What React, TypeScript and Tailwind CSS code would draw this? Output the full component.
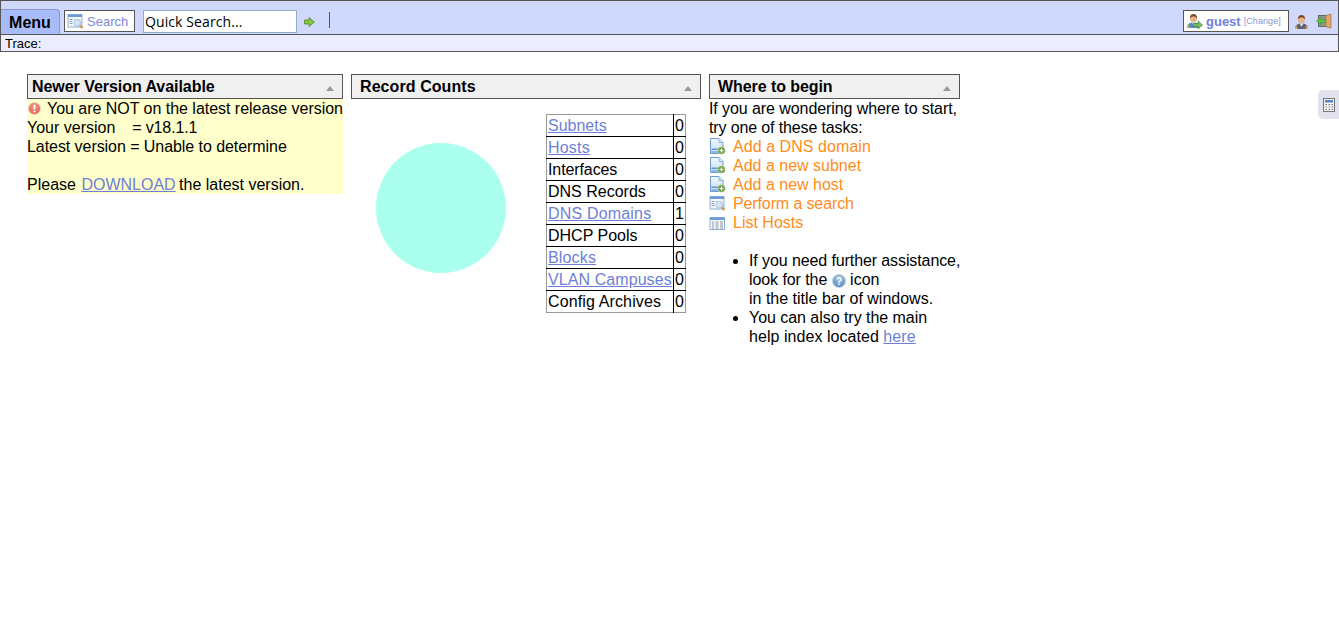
const font = "[font-family:'Liberation_Sans',Arial,sans-serif]";

// small app icons, all drawn by hand
function SearchIcon({ className = "" }: { className?: string }) {
  return (
    <svg width="17" height="17" viewBox="0 0 17 17" className={className}>
      <defs>
        <linearGradient id="lens" x1="0" y1="0" x2="1" y2="1">
          <stop offset="0" stopColor="#eef6fd" />
          <stop offset="1" stopColor="#b5d2ec" />
        </linearGradient>
      </defs>
      <rect x="1" y="1.500" width="14" height="12.500" fill="#f4f7fc" stroke="#8fb0d8" />
      <rect x="1" y="1.500" width="14" height="2.500" fill="#6f9bd4" />
      <path d="M2.500 6.500h3M2.500 8.500h3M2.500 10.500h3" stroke="#8aa0bc" />
      <path d="M6.500 6.500h6" stroke="#c4d2e2" />
      <circle cx="10.500" cy="10" r="3.400" fill="url(#lens)" stroke="#a9c2da" />
      <path d="M13 12.500l2.500 2.500" stroke="#d9924a" strokeWidth="2" />
    </svg>
  );
}

function AddPageIcon() {
  return (
    <svg width="17" height="17" viewBox="0 0 17 17">
      <defs>
        <linearGradient id="page" x1="0" y1="0" x2="0" y2="1">
          <stop offset="0" stopColor="#f4f9fe" />
          <stop offset="1" stopColor="#c4dcf3" />
        </linearGradient>
      </defs>
      <path d="M1.500 .5h8.500l4 4v11h-12.500z" fill="url(#page)" stroke="#6f9bd0" />
      <path d="M10 .5v4h4" fill="#d8e8f7" stroke="#8fb4dc" />
      <rect x="2.500" y="10.500" width="9" height="1.500" fill="#5d9ad8" />
      <rect x="2.500" y="13" width="9" height="2" fill="#8ab8e4" />
      <circle cx="12.500" cy="12.500" r="3.800" fill="#6c9c48" stroke="#eaf2e0" strokeWidth=".5" />
      <path d="M10.500 12.500h4M12.500 10.500v4" stroke="#fff" strokeWidth="1.200" />
    </svg>
  );
}

function ListIcon() {
  return (
    <svg width="17" height="17" viewBox="0 0 17 17">
      <rect x="1" y="3.500" width="14.500" height="12" fill="#f6f8fc" stroke="#8fb0d8" />
      <rect x="1" y="3.500" width="14.500" height="2.500" fill="#6f9bd4" />
      <path d="M3 8h2M6.500 8h3M11 8h3M3 10h2M6.500 10h3M11 10h3M3 12h2M6.500 12h3M11 12h3M3 14h2M6.500 14h3M11 14h3" stroke="#8d96a4" />
    </svg>
  );
}

function Person({ shirt = "#5f6470" }: { shirt?: string }) {
  return (
    <g>
      <path d="M1 15c0-4 2.500-5.500 6.500-5.500s6.500 1.500 6.500 5.500z" fill={shirt} />
      <path d="M1 15c0-2 .5-3 1.500-4l1 4zM14 15c0-2-.5-3-1.500-4l-1 4z" fill="#e0a070" />
      <path d="M5.500 9.500l2 3 2-3z" fill="#e9e9e9" />
      <circle cx="7.500" cy="5.500" r="3.500" fill="#e8b088" />
      <path d="M3.800 5.500c0-3.200 1.700-4.500 3.700-4.500s3.700 1.300 3.700 4.500c-1-1.500-2.200-2-3.700-2s-2.700.5-3.700 2z" fill="#7a4522" />
    </g>
  );
}

function PanelHeader({ title, className, titleClass }: { title: string; className: string; titleClass: string }) {
  return (
    <div className={`flex h-[25px] items-center justify-between border border-[#555] bg-[#f0f0f0] pr-[8px] ${className}`}>
      <span className={`text-[16px] font-bold text-black ${titleClass}`}>{title}</span>
      <span className="mt-[3px] h-0 w-0 border-x-[4px] border-b-[5px] border-x-transparent border-b-[#999]" />
    </div>
  );
}

const link = "text-[#6d7fd8] underline";

const counts = [
  { label: "Subnets", value: 0, href: true, fit: "" },
  { label: "Hosts", value: 0, href: true, fit: "tracking-[0.2px]" },
  { label: "Interfaces", value: 0, href: false, fit: "tracking-[-0.1px]" },
  { label: "DNS Records", value: 0, href: false, fit: "" },
  { label: "DNS Domains", value: 1, href: true, fit: "tracking-[0.18px]" },
  { label: "DHCP Pools", value: 0, href: false, fit: "" },
  { label: "Blocks", value: 0, href: true, fit: "tracking-[0.16px]" },
  { label: "VLAN Campuses", value: 0, href: true, fit: "tracking-[0.08px]" },
  { label: "Config Archives", value: 0, href: false, fit: "tracking-[0.13px]" },
];

const tasks = [
  { label: "Add a DNS domain", icon: <AddPageIcon />, fit: "tracking-[0.06px]" },
  { label: "Add a new subnet", icon: <AddPageIcon />, fit: "" },
  { label: "Add a new host", icon: <AddPageIcon />, fit: "" },
  { label: "Perform a search", icon: <SearchIcon />, fit: "tracking-[-0.12px]" },
  { label: "List Hosts", icon: <ListIcon />, fit: "" },
];

export default function App() {
  return (
    <div className={`relative min-h-[636px] bg-white text-[16px] leading-[19px] text-black ${font}`}>
      {/* Top bar */}
      <div className="flex h-[35px] items-end justify-between border-x border-y border-x-[#555] border-t-[#555] border-b-[#555] bg-[#d0d9fc]">
        <div className="flex items-end">
          <div className="flex h-[25px] w-[59px] items-center justify-center rounded-tr-[4px] border-t border-r border-[#8a97c8] bg-[#a9bcfa] text-[16px] font-bold">
            Menu
          </div>
          <div className="mb-[2px] ml-[4px] flex h-[22px] w-[71px] items-center gap-[3px] border border-[#555] bg-white pl-[2px] text-[13px] text-[#7d88e0]">
            <SearchIcon />
            <span>Search</span>
          </div>
          <div className="mb-[1px] ml-[8px] flex h-[23px] w-[154px] items-center border border-[#8fb0c4] bg-white pl-[1px] font-['Open_Sans',sans-serif] text-[14px] tracking-[0.1px] text-black">
            Quick Search...
          </div>
          <svg width="11" height="10" viewBox="0 0 11 10" className="mb-[7px] ml-[7px]">
            <path d="M.5 3h4.500V.5L10.500 5 5 9.500V7H.5z" fill="#86c440" stroke="#4f8a26" strokeWidth=".8" />
          </svg>
          <div className="mb-[6px] ml-[14px] h-[16px] w-px bg-[#555]" />
        </div>
        <div className="mb-[2px] flex items-center">
          <div className="flex h-[22px] w-[106px] items-center border border-[#555] bg-white pl-[2px]">
            <svg width="17" height="17" viewBox="0 0 17 17">
              <Person shirt="#4a90d9" />
              <path d="M7 10.500h5V8l4.500 4-4.500 4v-2.500H7z" fill="#7cba62" stroke="#3c7a2c" strokeWidth=".6" />
            </svg>
            <span className="ml-[3px] text-[13px] font-bold text-[#7081d8]">guest</span>
            <span className="ml-[3px] text-[9px] tracking-[0.08px] text-[#8a96d8]">[Change]</span>
          </div>
          <svg width="15" height="15" viewBox="0 0 15 15" className="ml-[5px]">
            <Person />
          </svg>
          <svg width="17" height="16" viewBox="0 0 17 16" className="mr-[5px] ml-[7px]">
            <rect x="2" y="2" width="10" height="12" fill="#5f6e68" />
            <rect x="3" y="3" width="8" height="10" fill="#8a9690" />
            <path d="M10 2.500l5-1.500v14l-5-1z" fill="#dea868" stroke="#a9713c" strokeWidth=".7" />
            <path d="M.5 8l4-3.500V6.500h5v3h-5V11.500z" fill="#62c24a" stroke="#3c8a2c" strokeWidth=".5" />
          </svg>
        </div>
      </div>

      {/* Trace */}
      <div className="h-[17px] border-x border-b border-[#555] bg-[#ebedff] pt-px pl-[4px] text-[13px] leading-[16px]">Trace:</div>

      {/* Panels */}
      <div className="flex items-start gap-[8px] pt-[22px] pl-[27px]">
        <div className="w-[316px]">
          <PanelHeader title="Newer Version Available" className="pl-[4px]" titleClass="tracking-[-0.05px]" />
          <div className="h-[95px] bg-[#ffffcc] whitespace-pre">
            <div className="flex items-center">
              <svg width="15" height="15" viewBox="0 0 15 15" className="mr-[5px] ml-px">
                <defs>
                  <radialGradient id="err" cx="0.5" cy="0.3" r="0.8">
                    <stop offset="0" stopColor="#f59a8c" />
                    <stop offset="1" stopColor="#e4574a" />
                  </radialGradient>
                </defs>
                <circle cx="7.500" cy="7.500" r="7" fill="url(#err)" stroke="#e8dcc4" />
                <path d="M7.500 3.200v5.500" stroke="#fff" strokeWidth="2" />
                <circle cx="7.500" cy="11" r="1.200" fill="#fff" />
              </svg>
              <span className="-ml-[0px] pl-px tracking-[-0.025px]">You are NOT on the latest release version</span>
            </div>
            <div>
              Your version{"    "}
              <span className="-ml-px tracking-[-0.12px]">= v18.1.1</span>
            </div>
            <div className="tracking-[-0.06px]">Latest version = Unable to determine</div>
            <div className="h-[19px]" />
            <div>
              Please <a className={`${link} ml-px`}>DOWNLOAD</a>
              <span className="-ml-px"> the latest version.</span>
            </div>
          </div>
        </div>

        <div className="w-[350px]">
          <PanelHeader title="Record Counts" className="pl-[8px]" titleClass="tracking-[0.08px]" />
          <div className="flex items-start pt-[15px]">
            <div className="mt-[29px] ml-[25px] h-[130px] w-[130px] rounded-full bg-[#aaffee]" />
            <table className="ml-[40px] w-[140px] border-collapse border border-[#999]">
              <tbody>
                {counts.map((row, i) => (
                  <tr key={row.label} className={`h-[22px] ${i > 0 ? "border-t border-black" : ""}`}>
                    <td className={`w-[127px] p-0 pl-px whitespace-nowrap ${row.fit}`}>
                      {row.href ? <a className={link}>{row.label}</a> : row.label}
                    </td>
                    <td className="border-l border-black p-0 pl-px">{row.value}</td>
                  </tr>
                ))}
              </tbody>
            </table>
          </div>
        </div>

        <div className="w-[251px]">
          <PanelHeader title="Where to begin" className="pl-[8px]" titleClass="tracking-[-0.07px]" />
          <div className="whitespace-nowrap">
            <div className="tracking-[-0.08px]">If you are wondering where to start,</div>
            <div className="tracking-[-0.13px]">try one of these tasks:</div>
            {tasks.map((t) => (
              <div key={t.label} className="flex h-[19px] items-center">
                <span className="flex w-[24px]">{t.icon}</span>
                <span className={`text-[#ff8c1a] ${t.fit}`}>{t.label}</span>
              </div>
            ))}
            <ul className="mt-[19px] list-disc pl-[40px]">
              <li className="tracking-[-0.1px]">If you need further assistance,</li>
              <li className="list-none">
                <span className="tracking-[-0.08px]">look for the</span>{" "}
                <svg width="14" height="14" viewBox="0 0 14 14" className="inline align-[-3px]">
                  <defs>
                    <radialGradient id="help" cx="0.5" cy="0.3" r="0.8">
                      <stop offset="0" stopColor="#a8c8ea" />
                      <stop offset="1" stopColor="#4f82bc" />
                    </radialGradient>
                  </defs>
                  <circle cx="7" cy="7" r="6.500" fill="url(#help)" stroke="#c4d0de" />
                  <text x="7" y="10.500" textAnchor="middle" fontSize="10" fontWeight="bold" fill="#fff">?</text>
                </svg>{" "}
                icon
              </li>
              <li className="list-none">in the title bar of windows.</li>
              <li className="tracking-[-0.04px]">You can also try the main</li>
              <li className="list-none">
                <span className="tracking-[0.05px]">help index located</span> <a className={`${link} tracking-[0.1px]`}>here</a>
              </li>
            </ul>
          </div>
        </div>
      </div>

      {/* Calculator tab */}
      <div className="absolute top-[90px] right-0 flex h-[29px] w-[21px] items-center justify-center rounded-l-[5px] bg-[#e2e2ee]">
        <svg width="12" height="14" viewBox="0 0 12 14">
          <rect x=".5" y=".5" width="11" height="13" fill="#f2f2f2" stroke="#777" />
          <rect x="2" y="2" width="8" height="2.500" fill="#5b86c8" />
          <path d="M2.500 6.500h1.500M5.500 6.500h1.500M8.500 6.500h1.500M2.500 9h1.500M5.500 9h1.500M8.500 9h1.500M2.500 11.500h1.500M5.500 11.500h1.500M8.500 11.500h1.500" stroke="#777" />
        </svg>
      </div>
    </div>
  );
}
